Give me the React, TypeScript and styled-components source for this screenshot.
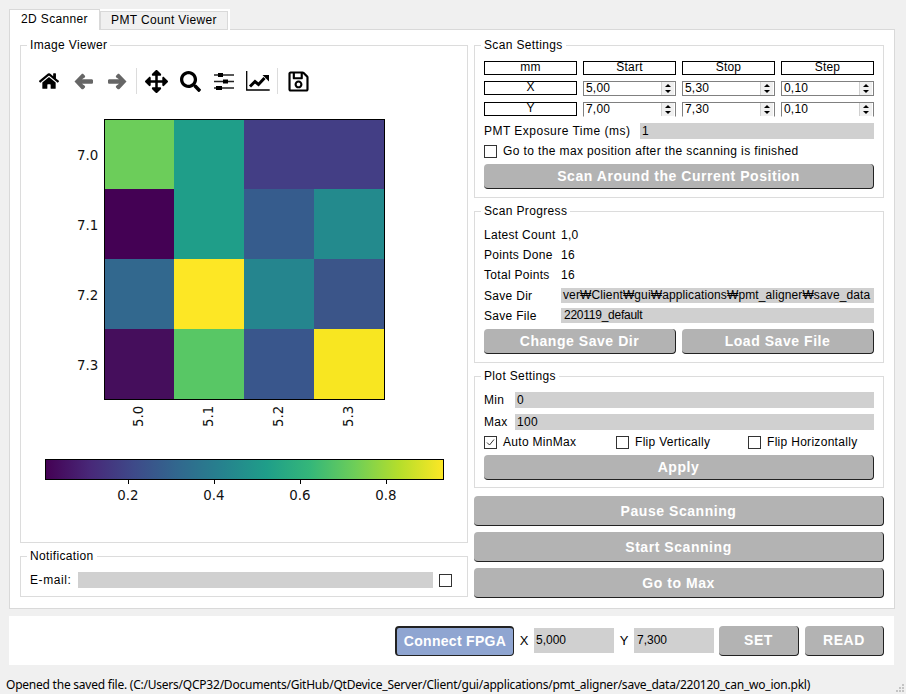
import React from 'react'
import styled, { createGlobalStyle } from 'styled-components'
import { FaHome, FaArrowsAlt, FaSearch, FaRegSave } from 'react-icons/fa'

const GlobalStyle = createGlobalStyle`
  html, body {
    margin: 0;
    padding: 0;
    background: #f0f0f0;
  }
  * {
    box-sizing: border-box;
  }
`

const Window = styled.div`
  width: 906px;
  height: 694px;
  position: relative;
  overflow: hidden;
  background: #f0f0f0;
  padding: 9px 11px 0 9px;
  font-family: 'Liberation Sans', Arial, sans-serif;
  font-size: 12px;
  color: #000;
`

const TabBar = styled.div`
  display: flex;
  align-items: flex-end;
  height: 21px;
  position: relative;
  z-index: 1;
`

const Tab = styled.div<{ $active?: boolean }>`
  height: ${(p) => (p.$active ? '21px' : '19px')};
  width: ${(p) => (p.$active ? '91px' : '128px')};
  background: ${(p) => (p.$active ? '#fff' : '#f0f0f0')};
  border: 1px solid #d9d9d9;
  border-bottom: ${(p) => (p.$active ? 'none' : '1px solid #d9d9d9')};
  outline: ${(p) => (p.$active ? 'none' : '2px solid #fff')};
  clip-path: ${(p) => (p.$active ? 'none' : 'inset(-2px -2px 0 0)')};
  text-align: center;
  line-height: ${(p) => (p.$active ? '18px' : '17px')};
  letter-spacing: 0.35px;
`

const Pane = styled.div`
  height: 580px;
  margin-top: -1px;
  background: #fff;
  border: 1px solid #d9d9d9;
  padding: 15px 10px 11px 10px;
  display: grid;
  grid-template-columns: 448px 410px;
  column-gap: 6px;
`

const Column = styled.div`
  display: flex;
  flex-direction: column;
`

const Group = styled.div<{ $h: number; $mb?: number }>`
  position: relative;
  height: ${(p) => p.$h}px;
  margin-bottom: ${(p) => p.$mb ?? 0}px;
  border: 1px solid #dcdcdc;
  flex: none;
`

const GroupTitle = styled.div`
  position: absolute;
  left: 6px;
  top: -8px;
  padding: 0 3px;
  background: #fff;
  line-height: 14px;
  letter-spacing: 0.35px;
`

const GroupBody = styled.div`
  height: 100%;
  padding: 14px 9px 0 9px;
  display: flex;
  flex-direction: column;
`

const Toolbar = styled.div`
  display: flex;
  align-items: center;
  height: 36px;
  margin: 17px 0 0 11px;
`

const ToolIcon = styled.div<{ $muted?: boolean; $w?: number }>`
  width: ${(p) => p.$w ?? 34}px;
  height: 24px;
  display: flex;
  align-items: center;
  justify-content: center;
  color: ${(p) => (p.$muted ? '#666' : '#000')};
`

const ToolSep = styled.div`
  width: 1px;
  height: 26px;
  background: #dcdcdc;
  margin: 0 2px;
`

const PlotSvg = styled.svg`
  display: block;
  margin-top: 10px;
`

const TickText = styled.text`
  font-family: 'DejaVu Sans', sans-serif;
  font-size: 13.4px;
  fill: #111;
`

const EmailRow = styled.div`
  display: flex;
  align-items: center;
  height: 16px;
  margin-top: 1px;
`

const EmailLabel = styled.span`
  width: 48px;
  letter-spacing: 0.6px;
`

const GreyField = styled.div<{ $w?: number; $h?: number; $pad?: number }>`
  flex: ${(p) => (p.$w ? 'none' : '1')};
  width: ${(p) => (p.$w ? `${p.$w}px` : 'auto')};
  height: ${(p) => p.$h ?? 16}px;
  background: #d0d0d0;
  line-height: ${(p) => p.$h ?? 16}px;
  padding-left: ${(p) => p.$pad ?? 2}px;
  white-space: nowrap;
  overflow: hidden;
`

const PathField = styled(GreyField)`
  letter-spacing: 0.12px;
`

const FileField = styled(GreyField)`
  letter-spacing: -0.25px;
`

const Check = styled.span`
  width: 13px;
  height: 13px;
  flex: none;
  border: 1px solid #333;
  background: #fff;
  display: inline-flex;
  align-items: center;
  justify-content: center;
`

const EmailCheck = styled(Check)`
  margin: 0 6px;
`

const SpinGrid = styled.div`
  display: grid;
  grid-template-columns: repeat(4, 93px);
  grid-template-rows: 14px 15px 15px;
  column-gap: 6px;
  row-gap: 6px;
  margin-top: 1px;
  margin-bottom: 6px;
`

const HeadCell = styled.div`
  height: 14px;
  border: 1px solid #000;
  line-height: 11px;
  text-align: center;
  letter-spacing: 0.2px;
`

const Spin = styled.div<{ $clipped?: boolean }>`
  height: 15px;
  display: flex;
  border: 1px solid #808080;
  border-bottom-color: ${(p) => (p.$clipped ? '#fff' : '#808080')};
  line-height: 13px;
  padding-left: 2px;
  justify-content: space-between;
  letter-spacing: 0.2px;
`

const SpinButtons = styled.div`
  width: 13px;
  display: flex;
  flex-direction: column;
  align-items: center;
  justify-content: space-around;
  background: #f0f0f0;
  border-left: 1px solid #d0d0d0;
  margin-right: 1px;
`

const Arrow = styled.span<{ $down?: boolean }>`
  width: 0;
  height: 0;
  border-left: 3px solid transparent;
  border-right: 3px solid transparent;
  border-bottom: ${(p) => (p.$down ? 'none' : '3px solid #000')};
  border-top: ${(p) => (p.$down ? '3px solid #000' : 'none')};
`

const Row = styled.div<{ $h?: number; $mt?: number }>`
  display: flex;
  align-items: center;
  height: ${(p) => p.$h ?? 16}px;
  margin-top: ${(p) => p.$mt ?? 0}px;
  letter-spacing: 0.3px;
  flex: none;
`

const RowLabel = styled.span<{ $w: number }>`
  width: ${(p) => p.$w}px;
  flex: none;
`

const PmtLabel = styled(RowLabel)`
  letter-spacing: 0.48px;
`

const CheckText = styled.span`
  margin-left: 6px;
  letter-spacing: 0.38px;
`

const ChecksRow = styled.div`
  display: grid;
  grid-template-columns: repeat(3, 132px);
  height: 16px;
  margin-top: 4px;
  letter-spacing: 0.3px;
`

const CheckItem = styled.label`
  display: flex;
  align-items: center;
  gap: 6px;
`

const GreyButton = styled.div<{ $h?: number; $w?: number; $mt?: number; $ml?: number }>`
  height: ${(p) => p.$h ?? 25}px;
  width: ${(p) => (p.$w ? `${p.$w}px` : 'auto')};
  margin-top: ${(p) => p.$mt ?? 0}px;
  margin-left: ${(p) => p.$ml ?? 0}px;
  background: #b3b3b3;
  color: #fff;
  border-radius: 4px;
  border-right: 1px solid #222;
  border-bottom: 1px solid #222;
  display: flex;
  align-items: center;
  justify-content: center;
  font-family: 'Liberation Sans', Arial, sans-serif;
  font-weight: 700;
  font-size: 14px;
  letter-spacing: 0.55px;
  flex: none;
`

const HalfButton = styled(GreyButton)`
  flex: 1;
`

const Actions = styled.div`
  display: flex;
  flex-direction: column;
  gap: 6px;
  margin-top: 8px;
`

const ButtonPair = styled.div`
  display: flex;
  gap: 6px;
  margin-top: 6px;
`

const BottomBar = styled.div`
  height: 49px;
  margin-top: 7px;
  margin-right: 1px;
  background: #fff;
  display: flex;
  align-items: center;
  justify-content: flex-end;
  padding-right: 10px;
`

const ConnectButton = styled.div`
  width: 119px;
  height: 30px;
  background: #8fa5d1;
  border: 1px solid #222;
  border-top-width: 2px;
  border-left-width: 2px;
  border-radius: 4px;
  color: #fff;
  font-weight: 700;
  font-size: 14px;
  letter-spacing: 0.3px;
  display: flex;
  align-items: center;
  justify-content: center;
`

const AxisLabel = styled.span`
  width: 20px;
  text-align: center;
  font-size: 13px;
`

const StatusBar = styled.div`
  position: absolute;
  left: 6px;
  bottom: 0;
  font-family: 'Noto Sans', sans-serif;
  font-size: 12px;
  letter-spacing: -0.23px;
  line-height: 18px;
  white-space: nowrap;
`

const Grip = styled.svg`
  position: absolute;
  right: 1px;
  bottom: 1px;
`

// viridis values as they show in the picture
const CELLS = [
  ['#6ccd5a', '#1f9e89', '#433e85', '#433e85'],
  ['#440154', '#1f9e89', '#365c8d', '#238a8d'],
  ['#32688e', '#fde725', '#25858e', '#3b5589'],
  ['#450e5c', '#58c765', '#39568c', '#f8e621'],
]
const VIRIDIS = ['#440154', '#482878', '#3e4a89', '#31688e', '#26828e', '#1f9e89', '#35b779', '#6ece58', '#b5de2b', '#fde725']
const X_TICKS = ['5.0', '5.1', '5.2', '5.3']
const Y_TICKS = ['7.0', '7.1', '7.2', '7.3']
const BAR_TICKS: [number, string][] = [
  [107, '0.2'],
  [193, '0.4'],
  [279, '0.6'],
  [365, '0.8'],
]

const BackIcon = ({ flip }: { flip?: boolean }) => (
  <svg width="19" height="17" viewBox="0 0 19 17" fill="currentColor">
    <path
      transform={flip ? 'matrix(-1 0 0 1 19 0)' : undefined}
      d="M0.5 8.5L7.5 1.2c.6-.6 1.4-.6 2 0l1.2 1.2c.6.6.6 1.4 0 2L8 6.3h9.6c.8 0 1.4.6 1.4 1.3v1.9c0 .8-.6 1.3-1.4 1.3H8l2.7 1.9c.6.6.6 1.4 0 2l-1.2 1.2c-.6.6-1.4.6-2 0z"
    />
  </svg>
)

const SlidersIcon = () => (
  <svg width="20" height="19" viewBox="0 0 20 19">
    <path d="M0 3h20M0 9.5h20M0 16h20" stroke="#222" strokeWidth="1.4" />
    <rect x="4" y="1" width="5" height="4" />
    <rect x="9" y="7.5" width="5" height="4" />
    <rect x="2" y="14" width="6" height="4" />
  </svg>
)

const LinesIcon = () => (
  <svg width="24" height="20" viewBox="0 0 24 20">
    <path d="M.7 0v19h23" fill="none" stroke="#000" strokeWidth="1.3" />
    <path d="M4 15.5l5-5 3.5 3 6-6.5" fill="none" stroke="#000" strokeWidth="3" />
    <path d="M16.5 4h6.5v6.5z" />
  </svg>
)

const Heatmap = () => (
  <PlotSvg width="446" height="425" viewBox="0 0 446 425">
    {CELLS.map((row, r) =>
      row.map((fill, c) => <rect key={`${r}-${c}`} x={83 + c * 70} y={10 + r * 70} width="71" height="71" fill={fill} />),
    )}
    <rect x="83.5" y="10.5" width="280" height="280" fill="none" stroke="#000" strokeWidth="1" />
    {Y_TICKS.map((t, i) => (
      <TickText key={t} x="56" y={51 + i * 70}>
        {t}
      </TickText>
    ))}
    {X_TICKS.map((t, i) => (
      <TickText key={t} transform={`translate(${122 + i * 70} 318) rotate(-90)`}>
        {t}
      </TickText>
    ))}
    <defs>
      <linearGradient id="viridis">
        {VIRIDIS.map((c, i) => (
          <stop key={c} offset={i / (VIRIDIS.length - 1)} stopColor={c} />
        ))}
      </linearGradient>
    </defs>
    <rect x="24.5" y="350.5" width="398" height="20" fill="url(#viridis)" stroke="#000" />
    {BAR_TICKS.map(([x, label]) => (
      <React.Fragment key={label}>
        <path d={`M${x + 0.5} 371v4`} stroke="#000" />
        <TickText x={x} y="391" textAnchor="middle">
          {label}
        </TickText>
      </React.Fragment>
    ))}
  </PlotSvg>
)

const SpinBox = ({ value, clipped }: { value: string; clipped?: boolean }) => (
  <Spin $clipped={clipped}>
    {value}
    <SpinButtons>
      <Arrow />
      <Arrow $down />
    </SpinButtons>
  </Spin>
)

const CheckMark = () => (
  <svg width="11" height="11" viewBox="0 0 11 11">
    <path d="M2 5.5l2.5 2.5L9 2.5" fill="none" stroke="#333" strokeWidth="1" />
  </svg>
)

export default function App() {
  return (
    <Window>
      <GlobalStyle />
      <TabBar>
        <Tab $active>2D Scanner</Tab>
        <Tab>PMT Count Viewer</Tab>
      </TabBar>
      <Pane>
        <Column>
          <Group $h={498} $mb={13}>
            <GroupTitle>Image Viewer</GroupTitle>
            <Toolbar>
              <ToolIcon>
                <FaHome size={20} />
              </ToolIcon>
              <ToolIcon $muted>
                <BackIcon />
              </ToolIcon>
              <ToolIcon $muted>
                <BackIcon flip />
              </ToolIcon>
              <ToolSep />
              <ToolIcon>
                <FaArrowsAlt size={23} />
              </ToolIcon>
              <ToolIcon>
                <FaSearch size={21} />
              </ToolIcon>
              <ToolIcon>
                <SlidersIcon />
              </ToolIcon>
              <ToolIcon>
                <LinesIcon />
              </ToolIcon>
              <ToolSep />
              <ToolIcon $w={36}>
                <FaRegSave size={23} />
              </ToolIcon>
            </Toolbar>
            <Heatmap />
          </Group>
          <Group $h={41}>
            <GroupTitle>Notification</GroupTitle>
            <GroupBody>
              <EmailRow>
                <EmailLabel>E-mail:</EmailLabel>
                <GreyField />
                <EmailCheck />
              </EmailRow>
            </GroupBody>
          </Group>
        </Column>
        <Column>
          <Group $h={153} $mb={13}>
            <GroupTitle>Scan Settings</GroupTitle>
            <GroupBody>
              <SpinGrid>
                <HeadCell>mm</HeadCell>
                <HeadCell>Start</HeadCell>
                <HeadCell>Stop</HeadCell>
                <HeadCell>Step</HeadCell>
                <HeadCell>X</HeadCell>
                <SpinBox value="5,00" />
                <SpinBox value="5,30" />
                <SpinBox value="0,10" />
                <HeadCell>Y</HeadCell>
                <SpinBox value="7,00" clipped />
                <SpinBox value="7,30" clipped />
                <SpinBox value="0,10" clipped />
              </SpinGrid>
              <Row>
                <PmtLabel $w={156}>PMT Exposure Time (ms)</PmtLabel>
                <GreyField>1</GreyField>
              </Row>
              <Row $mt={4}>
                <Check />
                <CheckText>Go to the max position after the scanning is finished</CheckText>
              </Row>
              <GreyButton $mt={5}>Scan Around the Current Position</GreyButton>
            </GroupBody>
          </Group>
          <Group $h={152} $mb={13}>
            <GroupTitle>Scan Progress</GroupTitle>
            <GroupBody>
              <Row $mt={1}>
                <RowLabel $w={77}>Latest Count</RowLabel>1,0
              </Row>
              <Row $mt={4}>
                <RowLabel $w={77}>Points Done</RowLabel>16
              </Row>
              <Row $mt={4}>
                <RowLabel $w={77}>Total Points</RowLabel>16
              </Row>
              <Row $mt={5} $h={15}>
                <RowLabel $w={77}>Save Dir</RowLabel>
                <PathField $h={15}>ver₩Client₩gui₩applications₩pmt_aligner₩save_data</PathField>
              </Row>
              <Row $mt={5} $h={15}>
                <RowLabel $w={77}>Save File</RowLabel>
                <FileField $h={15} $pad={3}>
                  220119_default
                </FileField>
              </Row>
              <ButtonPair>
                <HalfButton>Change Save Dir</HalfButton>
                <HalfButton>Load Save File</HalfButton>
              </ButtonPair>
            </GroupBody>
          </Group>
          <Group $h={112}>
            <GroupTitle>Plot Settings</GroupTitle>
            <GroupBody>
              <Row $mt={1}>
                <RowLabel $w={31}>Min</RowLabel>
                <GreyField>0</GreyField>
              </Row>
              <Row $mt={6}>
                <RowLabel $w={31}>Max</RowLabel>
                <GreyField>100</GreyField>
              </Row>
              <ChecksRow>
                <CheckItem>
                  <Check>
                    <CheckMark />
                  </Check>
                  Auto MinMax
                </CheckItem>
                <CheckItem>
                  <Check />
                  Flip Vertically
                </CheckItem>
                <CheckItem>
                  <Check />
                  Flip Horizontally
                </CheckItem>
              </ChecksRow>
              <GreyButton $mt={5}>Apply</GreyButton>
            </GroupBody>
          </Group>
          <Actions>
            <GreyButton $h={30}>Pause Scanning</GreyButton>
            <GreyButton $h={30}>Start Scanning</GreyButton>
            <GreyButton $h={30}>Go to Max</GreyButton>
          </Actions>
        </Column>
      </Pane>
      <BottomBar>
        <ConnectButton>Connect FPGA</ConnectButton>
        <AxisLabel>X</AxisLabel>
        <GreyField $w={80} $h={25} $pad={2}>
          5,000
        </GreyField>
        <AxisLabel>Y</AxisLabel>
        <GreyField $w={80} $h={25} $pad={3}>
          7,300
        </GreyField>
        <GreyButton $h={30} $w={80} $ml={5}>
          SET
        </GreyButton>
        <GreyButton $h={30} $w={79} $ml={6}>
          READ
        </GreyButton>
      </BottomBar>
      <StatusBar>
        Opened the saved file. (C:/Users/QCP32/Documents/GitHub/QtDevice_Server/Client/gui/applications/pmt_aligner/save_data/220120_can_wo_ion.pkl)
      </StatusBar>
      <Grip width="10" height="10" viewBox="0 0 10 10">
        <path d="M7 1h2v2H7zM4 4h2v2H4zM7 4h2v2H7zM1 7h2v2H1zM4 7h2v2H4zM7 7h2v2H7z" fill="#c4c4c4" />
      </Grip>
    </Window>
  )
}
